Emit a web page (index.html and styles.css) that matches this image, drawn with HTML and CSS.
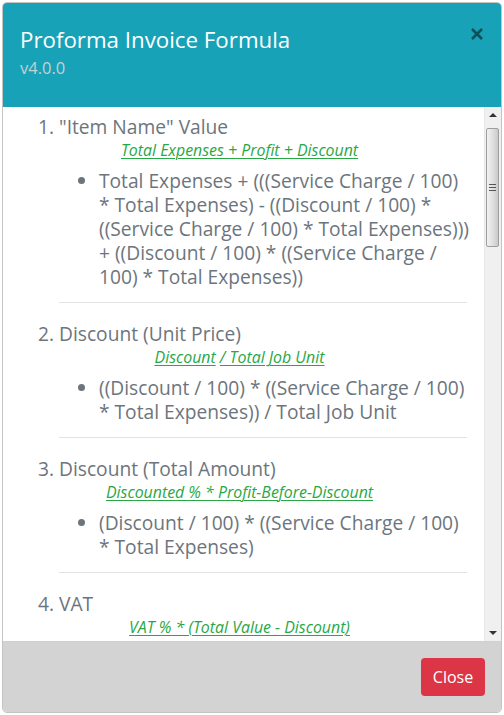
FILE: index.html
```
<!DOCTYPE html>
<html lang="en">
<head>
<meta charset="utf-8">
<title>Proforma Invoice Formula</title>
<link rel="stylesheet" href="styles.css">
</head>
<body>
<div class="modal">
  <header class="mhead">
    <div class="titles">
      <h4 class="title">Proforma Invoice Formula</h4>
      <div class="ver">v4.0.0</div>
    </div>
    <button class="xbtn" aria-label="Close">
      <svg width="14" height="14" viewBox="0 0 14 14"><path d="M2 2 L12 12 M12 2 L2 12" stroke="#0e4f5a" stroke-width="2.6" stroke-linecap="butt"/></svg>
    </button>
  </header>
  <div class="mbody">
    <div class="content">
      <ol class="formulas">
        <li>
          <div class="ftitle">"Item Name" Value</div>
          <div class="fsum"><u>Total Expenses + Profit + Discount</u></div>
          <ul class="fdetail"><li>Total Expenses + (((Service Charge / 100)<br>* Total Expenses) - ((Discount / 100) *<br>((Service Charge / 100) * Total Expenses)))<br>+ ((Discount / 100) * ((Service Charge /<br>100) * Total Expenses))</li></ul>
          <hr class="sep">
        </li>
        <li>
          <div class="ftitle">Discount (Unit Price)</div>
          <div class="fsum"><u>Discount</u> <u>/ Total Job Unit</u></div>
          <ul class="fdetail"><li>((Discount / 100) * ((Service Charge / 100)<br>* Total Expenses)) / Total Job Unit</li></ul>
          <hr class="sep">
        </li>
        <li>
          <div class="ftitle">Discount (Total Amount)</div>
          <div class="fsum"><u>Discounted % * Profit-Before-Discount</u></div>
          <ul class="fdetail"><li>(Discount / 100) * ((Service Charge / 100)<br>* Total Expenses)</li></ul>
          <hr class="sep">
        </li>
        <li>
          <div class="ftitle">VAT</div>
          <div class="fsum"><u>VAT % * (Total Value - Discount)</u></div>
        </li>
      </ol>
    </div>
    <div class="sbar">
      <div class="sarrow up"></div>
      <div class="strack">
        <div class="sthumb"><span class="grip"></span></div>
      </div>
      <div class="sarrow down"></div>
    </div>
  </div>
  <footer class="mfoot">
    <button class="btn-close">Close</button>
  </footer>
</div>
</body>
</html>
```
FILE: styles.css
```
html, body { margin: 0; padding: 0; background: #fff; }
body { font-family: "Open Sans", "Noto Sans", sans-serif; }

.modal {
  margin: 2px;
  height: 709px;
  border: 1px solid #c4c4c4;
  border-radius: 5px;
  overflow: hidden;
  display: flex;
  flex-direction: column;
}

.mhead {
  background: #17a2b8;
  padding: 20px 17px 27px 17px;
  display: flex;
  justify-content: space-between;
  align-items: flex-start;
  flex: 0 0 auto;
}
.title {
  margin: 0;
  font-weight: 400;
  font-size: 22.3px;
  line-height: 33px;
  color: #fff;
}
.ver {
  font-size: 16.5px;
  line-height: 24px;
  color: #c6d0d3;
}
.xbtn {
  border: 0;
  background: transparent;
  padding: 0;
  margin: 4px 0 0 0;
  width: 14px;
  height: 14px;
  display: flex;
}

.mbody {
  flex: 1 1 auto;
  display: flex;
  min-height: 0;
  background: #fff;
}
.content {
  flex: 1 1 auto;
  overflow: hidden;
  padding: 8px 17px 0 16px;
  color: #6c757d;
}
.formulas {
  margin: 0;
  padding-left: 40px;
  font-size: 19.2px;
  line-height: 24px;
}
.ftitle { line-height: 24px; }
.fsum {
  text-align: center;
  padding-right: 47px;
  font-size: 15.9px;
  line-height: 22px;
  font-style: italic;
  color: #28a745;
}
.fsum u { text-decoration-thickness: 1px; text-underline-offset: 2px; }
.fdetail {
  margin: 8px 0 0 0;
  padding-left: 40px;
  list-style: disc;
  white-space: nowrap;
}
.sep {
  margin: 13px 0 19px 0;
  border: 0;
  border-top: 1px solid #e3e3e3;
  height: 0;
}

.sbar {
  flex: 0 0 16px;
  background: #f0f0f0;
  border-left: 1px solid #e8e8e8;
  display: flex;
  flex-direction: column;
}
.sarrow {
  height: 17px;
  position: relative;
}
.sarrow::after {
  content: "";
  position: absolute;
  left: 4px;
  width: 0; height: 0;
  border-left: 4px solid transparent;
  border-right: 4px solid transparent;
}
.sarrow.up::after { top: 6px; border-bottom: 4px solid #333; }
.sarrow.down::after { top: 7px; border-top: 4px solid #333; }
.strack { flex: 1 1 auto; padding: 4px 0 0 1px; }
.sthumb {
  height: 119px;
  width: 13px;
  box-sizing: border-box;
  border: 1px solid #9e9e9e;
  border-radius: 2px;
  background: linear-gradient(to right, #f2f2f2, #dcdcdc 60%, #c9c9c9);
  display: flex;
  align-items: center;
  justify-content: center;
}
.grip {
  width: 7px;
  height: 7px;
  background: repeating-linear-gradient(to bottom, #555 0 1px, transparent 1px 3px);
}

.mfoot {
  flex: 0 0 auto;
  background: #d3d3d3;
  border-top: 1px solid #d0d0d0;
  padding: 16px 16px 16px 0;
  display: flex;
  justify-content: flex-end;
}
.btn-close {
  width: 64px;
  height: 38px;
  border: 0;
  border-radius: 4px;
  background: #dc3545;
  color: #fff;
  font-family: "Open Sans", sans-serif;
  font-size: 16px;
  padding: 0;
}
```
